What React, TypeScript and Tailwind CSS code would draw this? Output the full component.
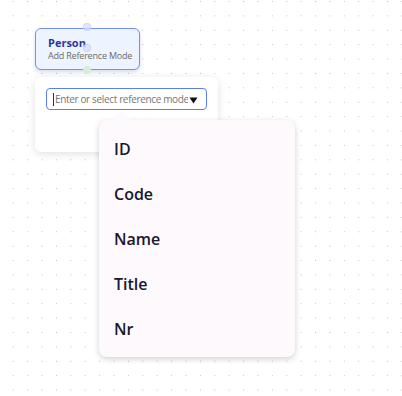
const ITEMS = ["ID", "Code", "Name", "Title", "Nr"];

export default function App() {
  return (
    <div
      className="relative h-[396px] w-[402px] overflow-hidden bg-white bg-[radial-gradient(circle,#bdbdbd_0.75px,transparent_0.9px)] bg-[length:14.4px_14.4px] bg-[position:6.1px_-5.7px]"
      style={{ fontFamily: '"Open Sans", "Noto Sans", sans-serif' }}
    >
      {/* ── Entity node ───────────────────────── */}
      <div className="absolute left-[35px] top-[28px] flex h-[42px] w-[105px] flex-col justify-center rounded-[6px] border-[1.5px] border-[#7092f3] bg-[#eef4ff] pl-[12px] shadow-[0_2px_4px_rgba(60,80,160,0.2)]">
        <span className="text-[11px] font-bold leading-[14px] text-[#2c359c]">Person</span>
        <span className="text-[9px] leading-[12px] tracking-[-0.2px] text-[#6b6b6b]">
          Add Reference Mode
        </span>
      </div>

      {/* handles */}
      <div className="absolute left-[83px] top-[23px] h-[8px] w-[8px] rounded-full border border-[#c2cff8]/70 bg-[#d4ddfa]/70" />
      <div className="absolute left-[83px] top-[44px] h-[8px] w-[8px] rounded-full border border-[#c2cff8]/70 bg-[#d4ddfa]/70" />
      <div className="absolute left-[83px] top-[66px] h-[8px] w-[8px] rounded-full bg-[#d6eedb]" />

      {/* ── Reference mode popover ────────────── */}
      <div className="absolute left-[35px] top-[77px] h-[75px] w-[183px] rounded-[6px] bg-white p-[11px] shadow-[0_2px_8px_rgba(0,0,0,0.12)]">
        <div className="flex h-[22px] w-[161px] items-center rounded-[4px] border-[1.5px] border-[#5d7ef0] bg-white pl-[6px] pr-[8px]">
          <span className="mr-[1px] h-[13px] w-px shrink-0 bg-[#333]" />
          <span className="flex-1 overflow-hidden whitespace-nowrap text-[10px] tracking-[-0.35px] text-[#777]">
            Enter or select reference mode
          </span>
          <svg width="9" height="7" viewBox="0 0 9 7" className="ml-[1px] mt-[3px] shrink-0">
            <path d="M0.5 0.5h8L4.5 6.5z" fill="#111" />
          </svg>
        </div>
      </div>

      {/* ── Options dropdown ──────────────────── */}
      <div className="absolute left-[99px] top-[120px] w-[196px] rounded-[8px] bg-[#fdf9fd] py-[6px] shadow-[0_2px_6px_rgba(0,0,0,0.18)]">
        <svg
          width="22"
          height="10"
          viewBox="0 0 22 10"
          className="absolute left-[11px] top-[-9px]"
        >
          <path d="M0 10 L11 0 L22 10 Z" fill="#fdf9fd" />
        </svg>
        {ITEMS.map((item) => (
          <div
            key={item}
            className="flex h-[45px] items-center pl-[15px] text-[16px] font-semibold text-[#19182a]"
          >
            {item}
          </div>
        ))}
      </div>
    </div>
  );
}
